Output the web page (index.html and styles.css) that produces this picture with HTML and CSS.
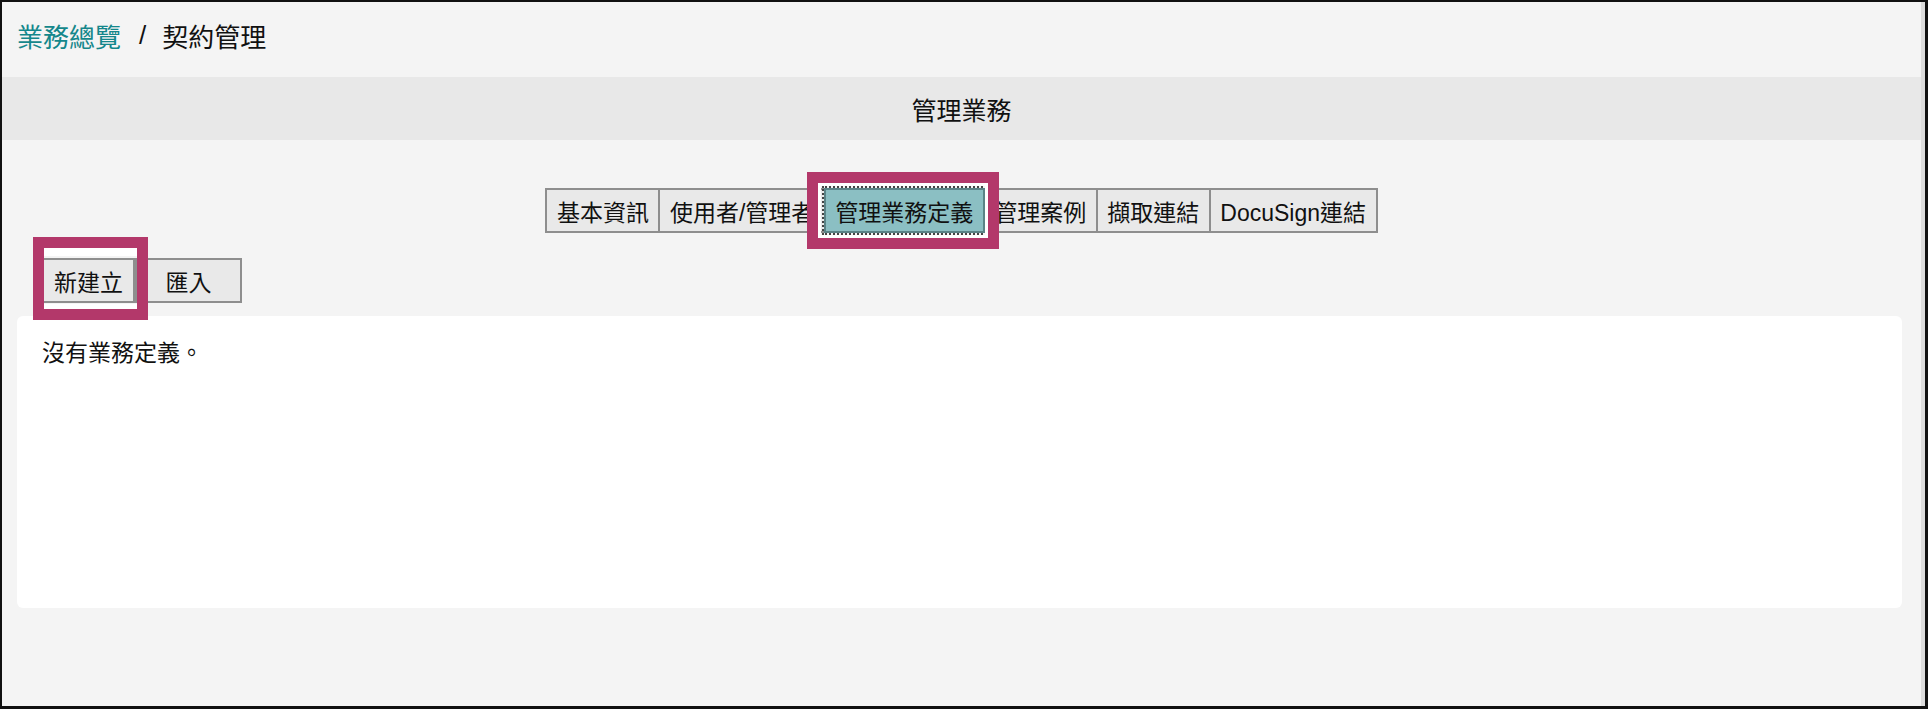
FILE: index.html
```html
<!DOCTYPE html>
<html lang="zh-Hant">
<head>
<meta charset="utf-8">
<title>契約管理</title>
<link rel="stylesheet" href="styles.css">
</head>
<body>
<div class="frame">
  <nav class="breadcrumb">
    <a class="crumb-link">業務總覽</a><span class="sep">/</span><span class="crumb-current">契約管理</span>
  </nav>
  <header class="title-bar">管理業務</header>
  <div class="tabs">
    <div class="tab">基本資訊</div>
    <div class="tab">使用者/管理者</div>
    <div class="tab active">管理業務定義</div>
    <div class="tab">管理案例</div>
    <div class="tab">擷取連結</div>
    <div class="tab">DocuSign連結</div>
  </div>
  <div class="toolbar">
    <div class="btn btn-new">新建立</div>
    <div class="btn btn-import">匯入</div>
  </div>
  <div class="panel">沒有業務定義。</div>
</div>
</body>
</html>
```
FILE: styles.css
```css
html, body {
  margin: 0;
  padding: 0;
  background: #f4f4f4;
}
body {
  font-family: "Liberation Sans", "Noto Sans CJK TC", sans-serif;
  color: #111;
}
.frame {
  width: 1928px;
  height: 709px;
  box-sizing: border-box;
  border-style: solid;
  border-color: #111;
  border-width: 2px 3px 3px 2px;
  box-shadow: inset -4px 0 0 #dcdcdc;
  padding-right: 4px;
  background: #f4f4f4;
  display: flex;
  flex-direction: column;
  overflow: hidden;
}
.breadcrumb {
  height: 75px;
  box-sizing: border-box;
  display: flex;
  align-items: center;
  padding: 0 0 8px 15px;
  font-size: 26px;
}
.crumb-link {
  color: #14878b;
}
.sep {
  margin: 0 16px 0 18px;
}
.title-bar {
  height: 63px;
  background: #e8e8e8;
  display: flex;
  align-items: center;
  justify-content: center;
  font-size: 25px;
}
.tabs {
  display: flex;
  justify-content: center;
  margin-top: 48px;
}
.tab {
  height: 45px;
  box-sizing: border-box;
  border: 2px solid #8e8e8e;
  background: #e9e9e9;
  padding: 0 9.5px;
  font-size: 23px;
  display: flex;
  align-items: center;
  white-space: nowrap;
}
.tab + .tab {
  margin-left: -2px;
}
.tab.active {
  background: #8bbfc3;
  border-color: #5a8386;
  outline: 2px dotted #444;
  position: relative;
  z-index: 1;
}
.tab.active::after {
  content: "";
  position: absolute;
  top: -18px;
  bottom: -18px;
  left: -19px;
  right: -16px;
  border: 11px solid #b3386a;
  box-shadow: inset 0 0 0 3px #fff;
}
.toolbar {
  display: flex;
  margin-top: 25px;
  padding-left: 40px;
}
.btn {
  height: 45px;
  box-sizing: border-box;
  border: 2px solid #8e8e8e;
  background: #e9e9e9;
  padding: 0 10px;
  font-size: 23px;
  display: flex;
  align-items: center;
  justify-content: center;
  white-space: nowrap;
}
.btn-import {
  min-width: 107px;
}
.btn-new {
  position: relative;
  z-index: 1;
}
.btn-new::after {
  content: "";
  position: absolute;
  left: -11px;
  right: -15px;
  top: -23px;
  bottom: -19px;
  border: 11px solid #b3386a;
  box-shadow: inset 0 8px 0 0 #fff, inset 0 -5px 0 0 #fff;
}
.panel {
  margin: 13px 19px 0 15px;
  height: 292px;
  box-sizing: border-box;
  background: #fff;
  border-radius: 6px;
  padding: 24px 25px;
  font-size: 23px;
  line-height: 1.2;
}
```
